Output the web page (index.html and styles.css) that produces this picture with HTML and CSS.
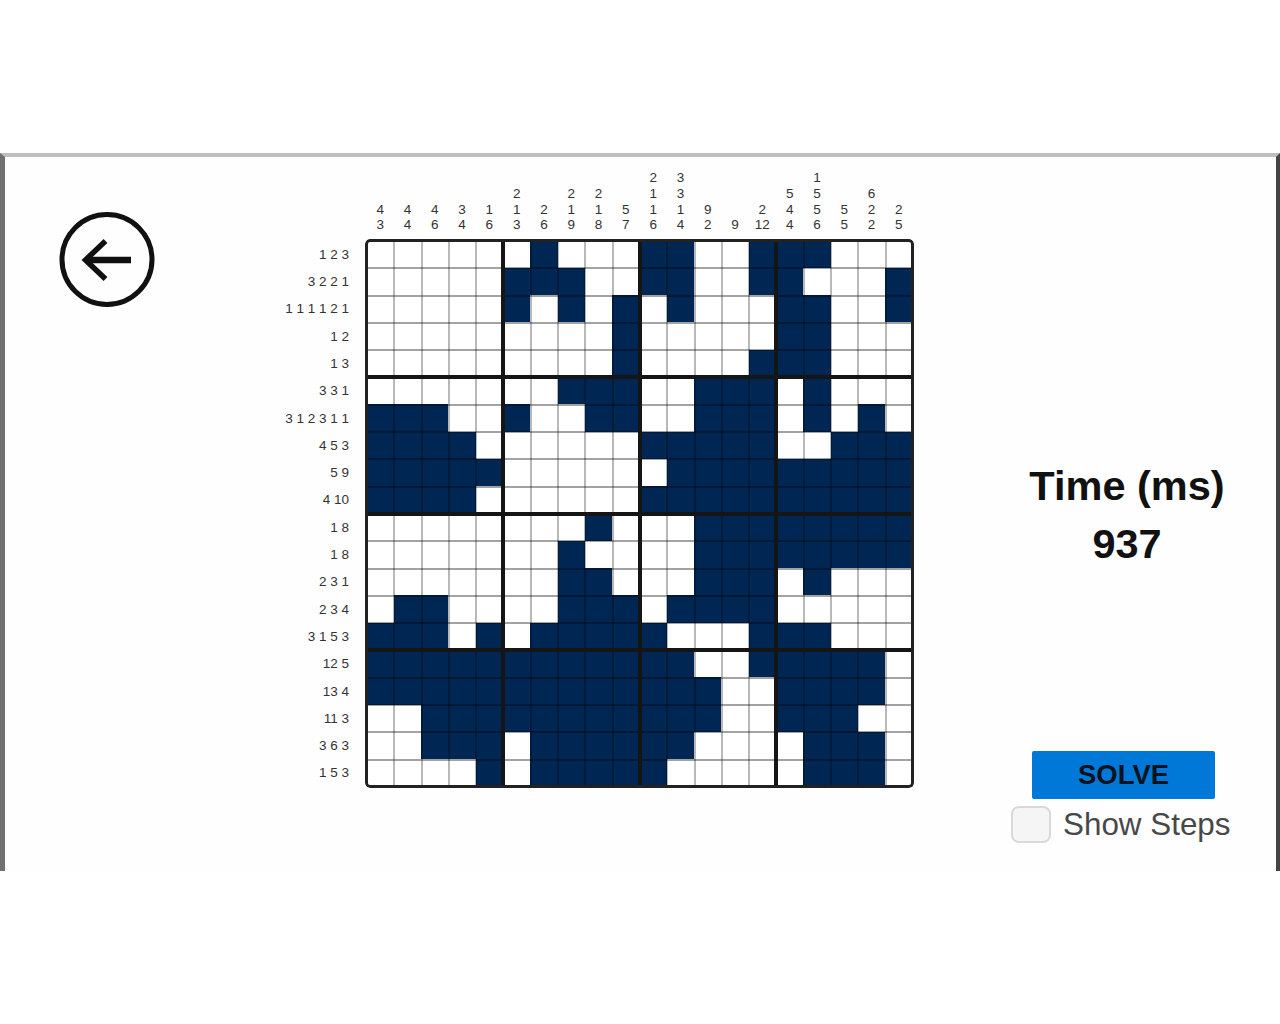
FILE: index.html
```
<!DOCTYPE html>
<html lang="en">
<head>
<meta charset="utf-8">
<title>Nonogram Solver</title>
<link rel="stylesheet" href="styles.css">
</head>
<body>
<main class="window">
  <nav class="nav">
    <button class="back" aria-label="Back">
      <svg viewBox="0 0 98 98" width="98" height="98" fill="none" stroke="#111">
        <circle cx="49" cy="49.500" r="45" stroke-width="5"/>
        <path d="M73 50H29" stroke-width="6.500"/>
        <path d="M47.500 31 27.500 50 47.500 69" stroke-width="5.500"/>
      </svg>
    </button>
  </nav>
  <section class="puzzle">
    <div class="column-hints" id="columns"></div>
    <div class="row-hints" id="rows"></div>
    <div class="board" id="board"></div>
  </section>
  <aside class="panel">
    <div class="timer">
      <div>Time (ms)</div>
      <div>937</div>
    </div>
    <button class="solve">SOLVE</button>
    <label class="steps"><input class="checkbox" type="checkbox"><span>Show Steps</span></label>
  </aside>
</main>
<script src="app.js"></script>
</body>
</html>
```
FILE: styles.css
```
* { box-sizing: border-box; }

body {
  margin: 0;
  padding-top: 153px;
  background: #fff;
  font-family: "Liberation Sans", Arial, sans-serif;
  color: #111;
}

.window {
  display: grid;
  grid-template-columns: 272px 638px 1fr;
  height: 718px;
  background: #fefefe;
  border-top: 4px solid #bfbfbf;
  border-left: 5px solid #707070;
  border-right: 4px solid #444;
}

.nav { padding: 53px 0 0 53px; }

.back {
  display: block;
  padding: 0;
  border: 0;
  background: none;
}

.back svg { display: block; }

.puzzle {
  display: grid;
  grid-template-columns: 72px 549px;
  grid-template-rows: 82px 549px;
  column-gap: 16px;
  align-content: start;
  font-size: 13.5px;
  line-height: 15.7px;
  color: #333;
}

.column-hints {
  grid-column: 2;
  display: grid;
  grid-template-columns: repeat(20, 1fr);
  align-items: end;
  padding: 0 1.500px 6px;
  text-align: center;
}

.column-hints span { display: block; }

.row-hints {
  display: grid;
  grid-template-rows: repeat(20, 1fr);
  align-items: center;
  justify-items: end;
  padding: 2px 0 1px;
  white-space: nowrap;
}

.board {
  position: relative;
  display: grid;
  grid-template: repeat(20, 1fr) / repeat(20, 1fr);
  padding: 1.500px;
  border-radius: 5px;
  overflow: hidden;
  background: #fff;
}

.filled { background: #002653; }

/* Grid lines: thin for every cell, heavy for every block of five. */
.board::before,
.board::after {
  content: "";
  position: absolute;
  inset: 1.500px;
}

.board::before {
  background:
    repeating-linear-gradient(90deg, rgba(0, 0, 0, .28) 0 1px, transparent 1px 26.300px, rgba(0, 0, 0, .28) 26.300px 27.300px),
    repeating-linear-gradient(rgba(0, 0, 0, .36) 0 1px, transparent 1px 26.300px, rgba(0, 0, 0, .36) 26.300px 27.300px);
}

.board::after {
  inset: 0;
  border: 3.500px solid #222;
  border-radius: 5px;
  background:
    linear-gradient(#151515, #151515) 133px 0 / 4px 100% no-repeat,
    linear-gradient(#151515, #151515) 270px 0 / 4px 100% no-repeat,
    linear-gradient(#151515, #151515) 406px 0 / 4px 100% no-repeat,
    linear-gradient(#151515, #151515) 0 133px / 100% 4px no-repeat,
    linear-gradient(#151515, #151515) 0 270px / 100% 4px no-repeat,
    linear-gradient(#151515, #151515) 0 406px / 100% 4px no-repeat;
}

.panel {
  display: flex;
  flex-direction: column;
  align-items: flex-start;
  padding: 300px 0 0 91px;
}

.timer {
  width: 240px;
  margin-left: 1px;
  text-align: center;
  font-size: 41.5px;
  font-weight: 700;
  line-height: 58px;
}

.solve {
  width: 183px;
  height: 48px;
  margin: 178px 0 0 26px;
  padding: 0;
  border: 0;
  border-radius: 2px;
  background: #0078d7;
  font: 700 27.5px/48px "Liberation Sans", Arial, sans-serif;
  color: #07121d;
}

.steps {
  display: flex;
  align-items: center;
  gap: 12px;
  margin: 7px 0 0 5px;
  font-size: 31.4px;
  line-height: 37px;
  color: #484848;
  white-space: nowrap;
}

.checkbox {
  appearance: none;
  width: 40px;
  height: 37px;
  margin: 0;
  border: 2px solid #d9d9d9;
  border-radius: 8px;
  background: #f5f5f5;
}
```
FILE: app.js
```
const solution = [
  "......#...##..###...",
  ".....###..##..##...#",
  ".....#.#.#.#...##..#",
  ".........#.....##...",
  ".........#....###...",
  ".......###..###.#...",
  "###..#..##..###.#.#.",
  "####......#####..###",
  "#####......#########",
  "####......##########",
  "........#...########",
  ".......#....########",
  ".......##...###.#...",
  ".##....###.####.....",
  "###.#.#####...###...",
  "############..#####.",
  "#############..####.",
  "..###########..###..",
  "..###.######....###.",
  "....#.#####.....###."
];

// Lengths of the consecutive filled cells in one row or column.
const runs = line => (line.match(/#+/g) || []).map(run => run.length);

document.getElementById("board").innerHTML = solution.join("").split("")
  .map(cell => cell === "#" ? '<i class="filled"></i>' : "<i></i>").join("");

document.getElementById("rows").innerHTML = solution
  .map(line => `<div>${runs(line).join(" ")}</div>`).join("");

document.getElementById("columns").innerHTML = [...solution[0]]
  .map((_, x) => runs(solution.map(line => line[x]).join("")))
  .map(hints => `<div>${hints.map(n => `<span>${n}</span>`).join("")}</div>`).join("");
```
